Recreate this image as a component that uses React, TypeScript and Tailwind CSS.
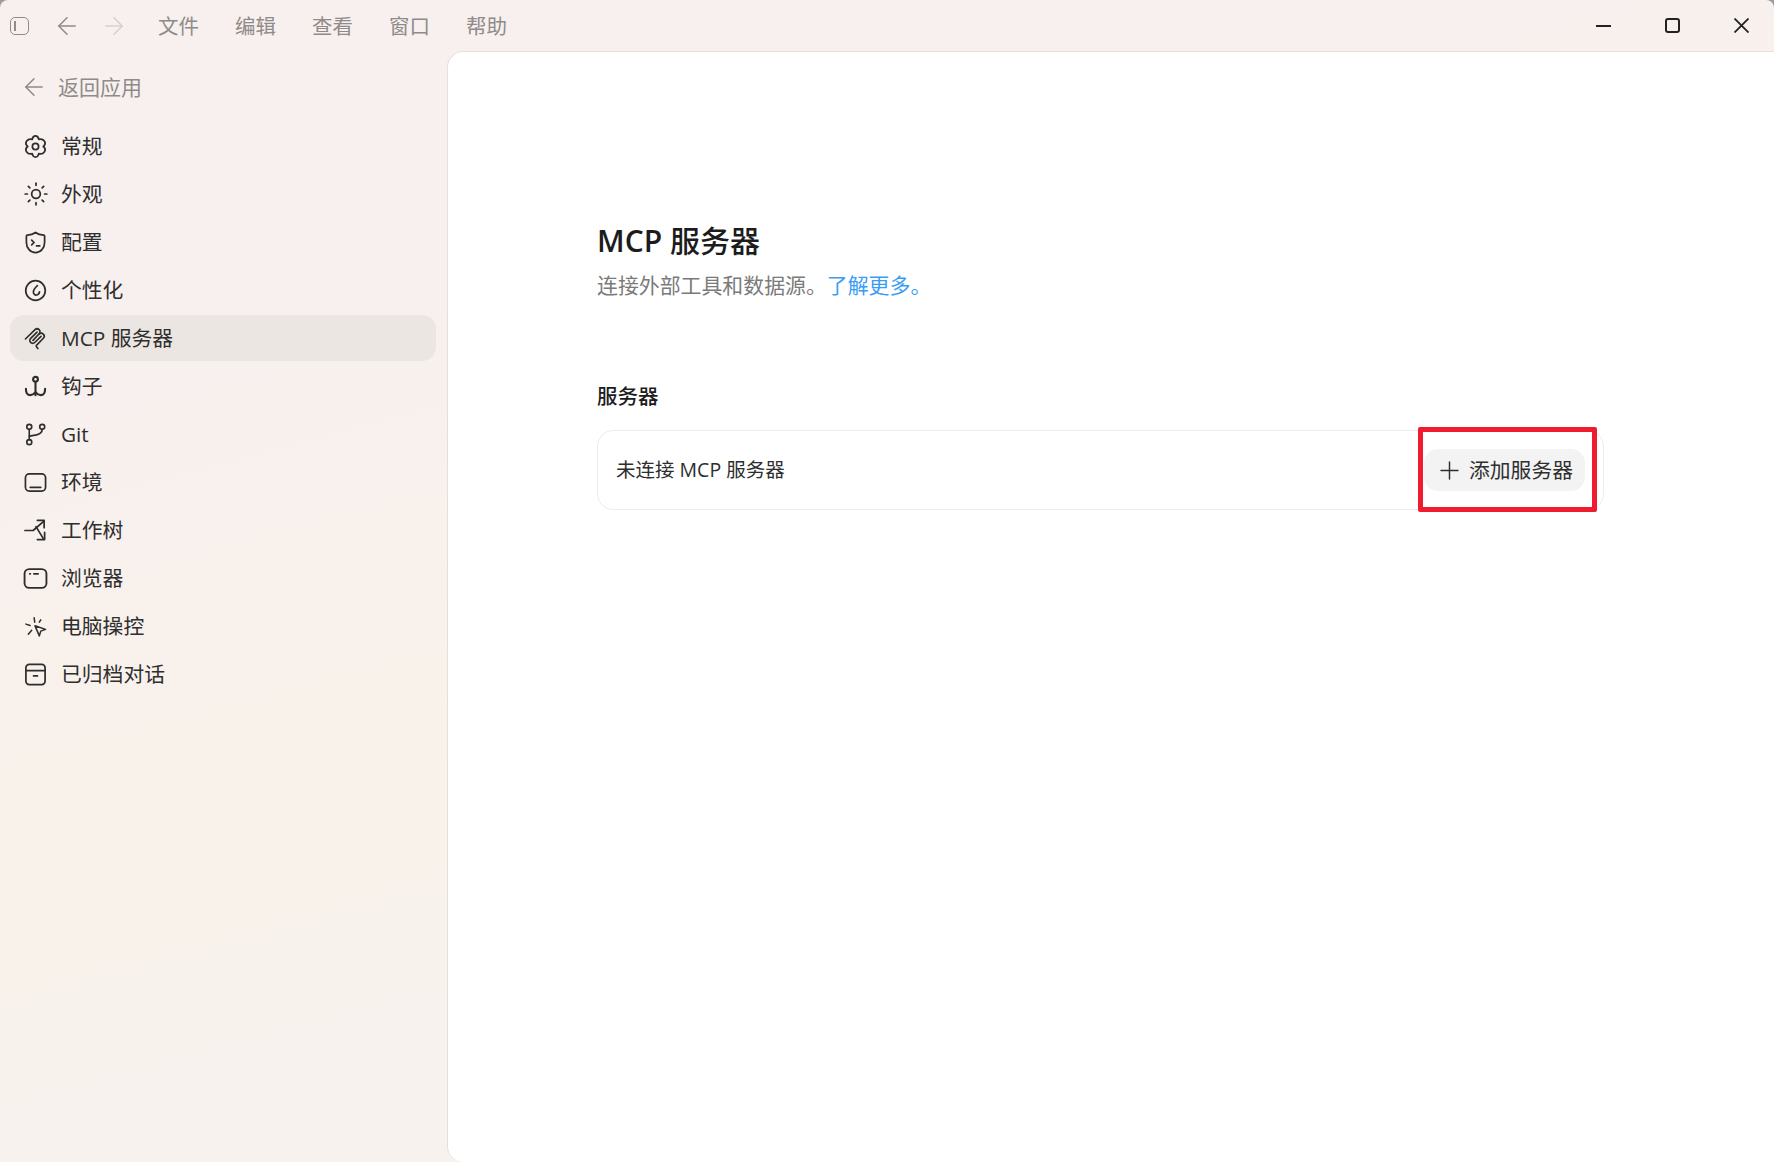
// App.tsx
import type { ReactNode } from 'react';
import { ArrowLeft, ArrowRight, Plus, Sun } from 'lucide-react';

// line icon wrapper, 24 unit box like the packages use
function Ico({ children, size = 23, sw = 1.8 }: { children: ReactNode; size?: number; sw?: number }) {
  return (
    <svg width={size} height={size} viewBox="0 0 24 24" fill="none" stroke="currentColor" strokeWidth={sw} strokeLinecap="round" strokeLinejoin="round">
      {children}
    </svg>
  );
}

const NAV = [
  {
    label: '常规',
    icon: (
      <Ico size={25} sw={1.7}>
        <path d="M8.800 5.200C9.800 .8 14.200 .8 15.200 5.200 19.500 3.800 23.500 8.500 19.500 12 23.500 15.500 19.500 20.200 15.200 18.800 14.200 23.200 9.800 23.200 8.800 18.800 4.500 20.200 .5 15.500 4.500 12 .5 8.500 4.500 3.800 8.800 5.200Z" />
        <circle cx="12" cy="12" r="3" />
      </Ico>
    ),
  },
  { label: '外观', icon: <Sun size={26} strokeWidth={1.6} /> },
  {
    label: '配置',
    icon: (
      <Ico>
        <path d="M12 1.500c2.500 1.800 5 2.600 8.500 2.900.6.100 1 .5 1 1.100V12c0 6-4.200 10.500-9.500 10.500S2.500 18 2.500 12V5.500c0-.6.400-1 1-1.100C7 4.100 9.500 3.300 12 1.500Z" />
        <path d="m8 9.500 2.500 2.500L8 14.500" />
        <path d="M13 15.500h3.500" />
      </Ico>
    ),
  },
  {
    label: '个性化',
    icon: (
      <Ico>
        <circle cx="12" cy="12" r="10.200" />
        <path d="M14 7C12 8.800 9.800 11 9.800 13.500 9.800 15.800 11.500 17 13 16.700 14.800 16.400 15.800 15 16.200 13.500" />
      </Ico>
    ),
  },
  {
    label: 'MCP 服务器',
    icon: (
      <Ico sw={1.7}>
        <path d="M1.500 12.500 11.500 2.800a3 3 0 0 1 4.300 4.300L9.400 14" />
        <path d="M15.700 7.500a3 3 0 0 1 4.500 4.300L13 19.200a1 1 0 0 0 0 1.400l1.500 1.900" />
        <path d="M13.600 5.300 7 11.800a3 3 0 0 0 4.200 4.400L17.800 9.800" />
      </Ico>
    ),
  },
  {
    label: '钩子',
    icon: (
      <Ico sw={2.2}>
        <circle cx="12" cy="4.500" r="2.500" />
        <path d="M12 7V21" />
        <path d="M2 14.500c0 4 1.500 6.500 4.500 6.500 2.500 0 4-1.300 5.500-3 1.500 1.700 3 3 5.500 3 3 0 4.500-2.500 4.500-6.500" />
      </Ico>
    ),
  },
  {
    label: 'Git',
    icon: (
      <Ico sw={1.7}>
        <circle cx="5.500" cy="4" r="2.600" />
        <circle cx="19" cy="4" r="2.600" />
        <circle cx="5.500" cy="20" r="2.600" />
        <path d="M5.500 6.600v10.800" />
        <path d="M19 6.600c0 3.500-3 5.400-7 6-2.500.4-5 .5-6.500 1.400" />
      </Ico>
    ),
  },
  {
    label: '环境',
    icon: (
      <Ico>
        <rect x="1.500" y="3" width="21" height="18" rx="4" />
        <path d="M6.500 17h11" />
      </Ico>
    ),
  },
  {
    label: '工作树',
    icon: (
      <Ico>
        <path d="M1 12H9.500L20.500 2.500" />
        <path d="M14 1.500h7V9" />
        <path d="M12.500 8 20.500 21" />
        <path d="M21.500 14v7.500h-7.500" />
      </Ico>
    ),
  },
  {
    label: '浏览器',
    icon: (
      <Ico size={25}>
        <rect x="1.500" y="3" width="21" height="18" rx="4.500" />
        <path d="M6.500 7.500h.5" />
        <path d="M10.500 7.500h4" />
      </Ico>
    ),
  },
  {
    label: '电脑操控',
    icon: (
      <Ico sw={1.6}>
        <path d="M11.500 11.300 22.500 15l-5 1.800-1.500 5Z" />
        <path d="M10.600 3l.6 4.500" />
        <path d="M2 9.500l4.300 1.500" />
        <path d="M4.500 20 8 16" />
        <path d="M17.500 5 16 7.500" />
      </Ico>
    ),
  },
  {
    label: '已归档对话',
    icon: (
      <Ico>
        <rect x="2" y="1.500" width="20" height="21" rx="3.500" />
        <path d="M2 8h20" />
        <path d="M10 13.500h4" />
      </Ico>
    ),
  },
];

const MENU = ['文件', '编辑', '查看', '窗口', '帮助'];

export default function App() {
  return (
    <div className="h-[1162px] w-full overflow-hidden bg-[#9c9c9c] font-['Open_Sans','Noto_Sans_CJK_SC',sans-serif]">
      <div className="flex h-full flex-col rounded-t-[8px] bg-[linear-gradient(165deg,#f8f0ee_0%,#f8f0ee_25%,#f9f2ea_54%,#f7f2ee_72%,#f7f2ee_100%)]">
        {/* title bar */}
        <div className="flex h-[51px] shrink-0 items-center">
          <div className="ml-[10px] flex h-[18px] w-[19px] items-center rounded-[5px] border-[1.5px] border-[#8f8b8a]">
            <div className="ml-[3px] h-[10px] w-[1.5px] bg-[#8f8b8a]" />
          </div>
          <ArrowLeft className="ml-[24px] text-[#8f8b8a]" size={28} strokeWidth={1.3} />
          <ArrowRight className="ml-[19px] text-[#d6cfcd]" size={28} strokeWidth={1.3} />
          <div className="ml-[30px] flex gap-[36px] pt-[1px] text-[20.500px] leading-none text-[#8f8b8a]">
            {MENU.map((m) => (
              <span key={m} className="w-[41px] whitespace-nowrap">{m}</span>
            ))}
          </div>
          <div className="ml-auto flex items-center">
            <div className="h-[2px] w-[15px] bg-[#222222]" />
            <div className="ml-[54px] h-[15px] w-[15px] rounded-[3px] border-2 border-[#222222]" />
            <svg className="mr-[25px] ml-[54px] text-[#222222]" width="15" height="15" viewBox="0 0 15 15" stroke="currentColor" strokeWidth="1.800">
              <path d="M.5.5l14 14M14.500.5l-14 14" />
            </svg>
          </div>
        </div>

        <div className="flex min-h-0 flex-1">
          {/* sidebar */}
          <aside className="w-[447px] shrink-0 px-[10px]">
            <div className="flex h-[72px] items-center gap-[10px] pl-[10px] text-[21px] text-[#8f8b8a]">
              <ArrowLeft size={28} strokeWidth={1.3} />
              <span className="pt-[1px]">返回应用</span>
            </div>
            <nav className="flex w-[426px] flex-col gap-[2px]">
              {NAV.map((item) => (
                <div
                  key={item.label}
                  className={`flex h-[46px] items-center rounded-[14px] text-[20.800px] text-[#2e2e2e] ${item.label === 'MCP 服务器' ? 'bg-[#ebe6e1]' : ''}`}
                >
                  <span className="flex w-[51px] justify-center">{item.icon}</span>
                  <span className="pt-[1px]">{item.label}</span>
                </div>
              ))}
            </nav>
          </aside>

          {/* content */}
          <main className="flex-1 rounded-l-[16px] border-t border-l border-[#e6dfde] bg-white pt-[169px] pl-[149px]">
            <div className="w-[1007px]">
              <h1 className="text-[30px] leading-[40px] font-medium text-[#1c1c1c]">
                <span className="font-semibold">MCP</span> 服务器
              </h1>
              <p className="mt-[9px] text-[20.900px] leading-[30px] text-[#7a7a7a]">
                连接外部工具和数据源。<span className="text-[#3b9cf5]">了解更多。</span>
              </p>
              <h2 className="mt-[81px] text-[20.500px] leading-[30px] font-medium text-[#1c1c1c]">服务器</h2>
              <div className="mt-[19px] flex h-[80px] items-center justify-between rounded-[16px] border border-[#ececec] pr-[18px] pl-[18px]">
                <span className="text-[19.500px] text-[#2e2e2e]">未连接 MCP 服务器</span>
                <div className="relative">
                  <button className="flex h-[42px] w-[161px] items-center gap-[5px] rounded-[14px] bg-[#f3f3f3] pl-[11px] text-[20.800px] text-[#2e2e2e]">
                    <Plus size={29} strokeWidth={1.2} />
                    <span className="pt-[2px]">添加服务器</span>
                  </button>
                  {/* annotation box drawn over the button */}
                  <div className="absolute top-[-22px] left-[-6px] h-[85px] w-[179px] rounded-[2px] border-[5px] border-[#ee1c2e]" />
                </div>
              </div>
            </div>
          </main>
        </div>
      </div>
    </div>
  );
}
